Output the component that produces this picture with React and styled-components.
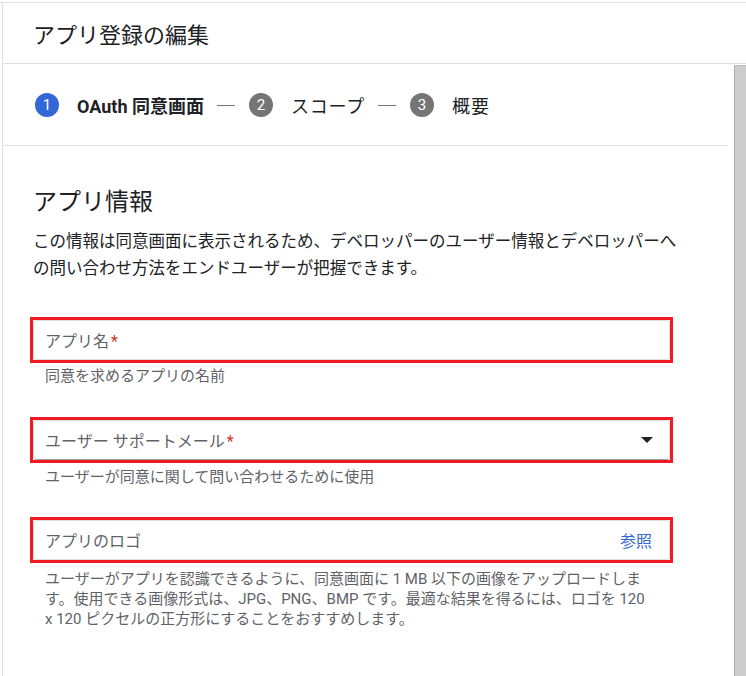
import React from "react";
import styled, { createGlobalStyle } from "styled-components";

const GlobalStyle = createGlobalStyle`
  html, body { margin: 0; padding: 0; background: #fff; }
  body {
    font-family: Roboto, "Noto Sans CJK JP", sans-serif;
    color: #202124;
    -webkit-font-smoothing: antialiased;
  }
`;

const Page = styled.div`
  height: 676px;
  box-sizing: border-box;
  padding-top: 2px;
  overflow: hidden;
  display: flex;
  flex-direction: column;
`;

const Frame = styled.div`
  flex: 1;
  min-height: 0;
  border-top: 1px solid #e0e0e0;
  display: flex;
  flex-direction: column;
`;

const Panel = styled.div`
  flex: 1;
  min-height: 0;
  margin-left: 2px;
  border-left: 1px solid #e0e0e0;
  display: flex;
  flex-direction: column;
`;

const Header = styled.header`
  height: 60px;
  flex: none;
  border-bottom: 1px solid #e0e0e0;
  display: flex;
  align-items: center;
  padding-left: 30px;
  font-size: 22px;
  font-weight: 400;
  color: #202124;
`;

const Body = styled.div`
  flex: 1;
  min-height: 0;
  display: flex;
`;

const Main = styled.main`
  flex: 1;
  min-width: 0;
  display: flex;
  flex-direction: column;
`;

const ScrollTrack = styled.div`
  width: 19px;
  flex: none;
  display: flex;
  justify-content: flex-end;
  padding-top: 1px;
`;

const ScrollThumb = styled.div`
  width: 11px;
  background: #cdcdcd;
  border-left: 1px solid #ababab;
  border-top: 1px solid #bdbdbd;
`;

const Stepper = styled.nav`
  height: 81px;
  flex: none;
  border-bottom: 1px solid #e0e0e0;
  display: flex;
  align-items: center;
  padding-left: 32px;
`;

const StepCircle = styled.span`
  width: 24px;
  height: 24px;
  border-radius: 50%;
  background: ${(p) => (p.$active ? "#3367d6" : "#757575")};
  color: #fff;
  font-size: 15px;
  display: flex;
  align-items: center;
  justify-content: center;
  flex: none;
`;

const StepLabel = styled.span`
  margin-left: 18px;
  font-size: 18px;
  font-weight: ${(p) => (p.$active ? 700 : 400)};
  letter-spacing: ${(p) => (p.$active ? "0" : "0.8px")};
  color: #202124;
  white-space: nowrap;
`;

const StepDash = styled.span`
  width: 18px;
  height: 1px;
  margin: 1px 14px 0 13px;
  background: #757575;
  flex: none;
`;

const Section = styled.section`
  padding: 40px 30px 0 30px;
`;

const Heading = styled.h2`
  margin: 0 0 10px;
  font-size: 24px;
  line-height: 32px;
  font-weight: 400;
  color: #202124;
`;

const Intro = styled.p`
  margin: 0 0 35px;
  font-size: 16.5px;
  line-height: 27px;
  color: #202124;
  white-space: nowrap;
`;

const FieldGroup = styled.div`
  height: 100px;
  width: 640px;
`;

const Highlight = styled.div`
  border: 3px solid #ed1c24;
  margin-left: -3px;
`;

const Field = styled.div`
  height: 40px;
  box-sizing: border-box;
  border: 1px solid #dadce0;
  border-bottom-color: ${(p) => (p.$select ? "#9aa0a6" : "#dadce0")};
  border-radius: 4px;
  display: flex;
  align-items: center;
  justify-content: space-between;
  padding: 0 17px 0 11px;
`;

const FieldLabel = styled.span`
  font-size: 16px;
  color: #5f6368;
`;

const Required = styled.span`
  color: #d93025;
  margin-left: 2px;
`;

const Browse = styled.span`
  font-size: 16px;
  color: #3367d6;
`;

const Helper = styled.div`
  margin-top: ${(p) => p.$gap || 6}px;
  padding-left: 12px;
  font-size: 15px;
  line-height: 20px;
  color: #5f6368;
  white-space: nowrap;
`;

const DropArrow = () => (
  <svg width="12" height="6" viewBox="0 0 12 6" style={{ marginRight: -1 }}>
    <path d="M0 0h12L6 6z" fill="#202124" />
  </svg>
);

const steps = [
  { n: 1, label: "OAuth 同意画面", active: true },
  { n: 2, label: "スコープ" },
  { n: 3, label: "概要" },
];

export default function App() {
  return (
    <>
      <GlobalStyle />
      <Page>
        <Frame>
          <Panel>
            <Header>アプリ登録の編集</Header>
            <Body>
              <Main>
                <Stepper>
                  {steps.map((s, i) => (
                    <React.Fragment key={s.n}>
                      {i > 0 && <StepDash />}
                      <StepCircle $active={s.active}>{s.n}</StepCircle>
                      <StepLabel $active={s.active}>{s.label}</StepLabel>
                    </React.Fragment>
                  ))}
                </Stepper>
                <Section>
                  <Heading>アプリ情報</Heading>
                  <Intro>
                    この情報は同意画面に表示されるため、デベロッパーのユーザー情報とデベロッパーへ
                    <br />
                    の問い合わせ方法をエンドユーザーが把握できます。
                  </Intro>

                  <FieldGroup>
                    <Highlight>
                      <Field>
                        <FieldLabel>
                          アプリ名<Required>*</Required>
                        </FieldLabel>
                      </Field>
                    </Highlight>
                    <Helper $gap={3}>同意を求めるアプリの名前</Helper>
                  </FieldGroup>

                  <FieldGroup>
                    <Highlight>
                      <Field $select>
                        <FieldLabel>
                          ユーザー サポートメール<Required>*</Required>
                        </FieldLabel>
                        <DropArrow />
                      </Field>
                    </Highlight>
                    <Helper $gap={4}>ユーザーが同意に関して問い合わせるために使用</Helper>
                  </FieldGroup>

                  <FieldGroup>
                    <Highlight>
                      <Field>
                        <FieldLabel>アプリのロゴ</FieldLabel>
                        <Browse>参照</Browse>
                      </Field>
                    </Highlight>
                    <Helper $gap={6}>
                      ユーザーがアプリを認識できるように、同意画面に 1 MB 以下の画像をアップロードしま
                      <br />
                      す。使用できる画像形式は、JPG、PNG、BMP です。最適な結果を得るには、ロゴを 120
                      <br />x 120 ピクセルの正方形にすることをおすすめします。
                    </Helper>
                  </FieldGroup>
                </Section>
              </Main>
              <ScrollTrack>
                <ScrollThumb />
              </ScrollTrack>
            </Body>
          </Panel>
        </Frame>
      </Page>
    </>
  );
}
